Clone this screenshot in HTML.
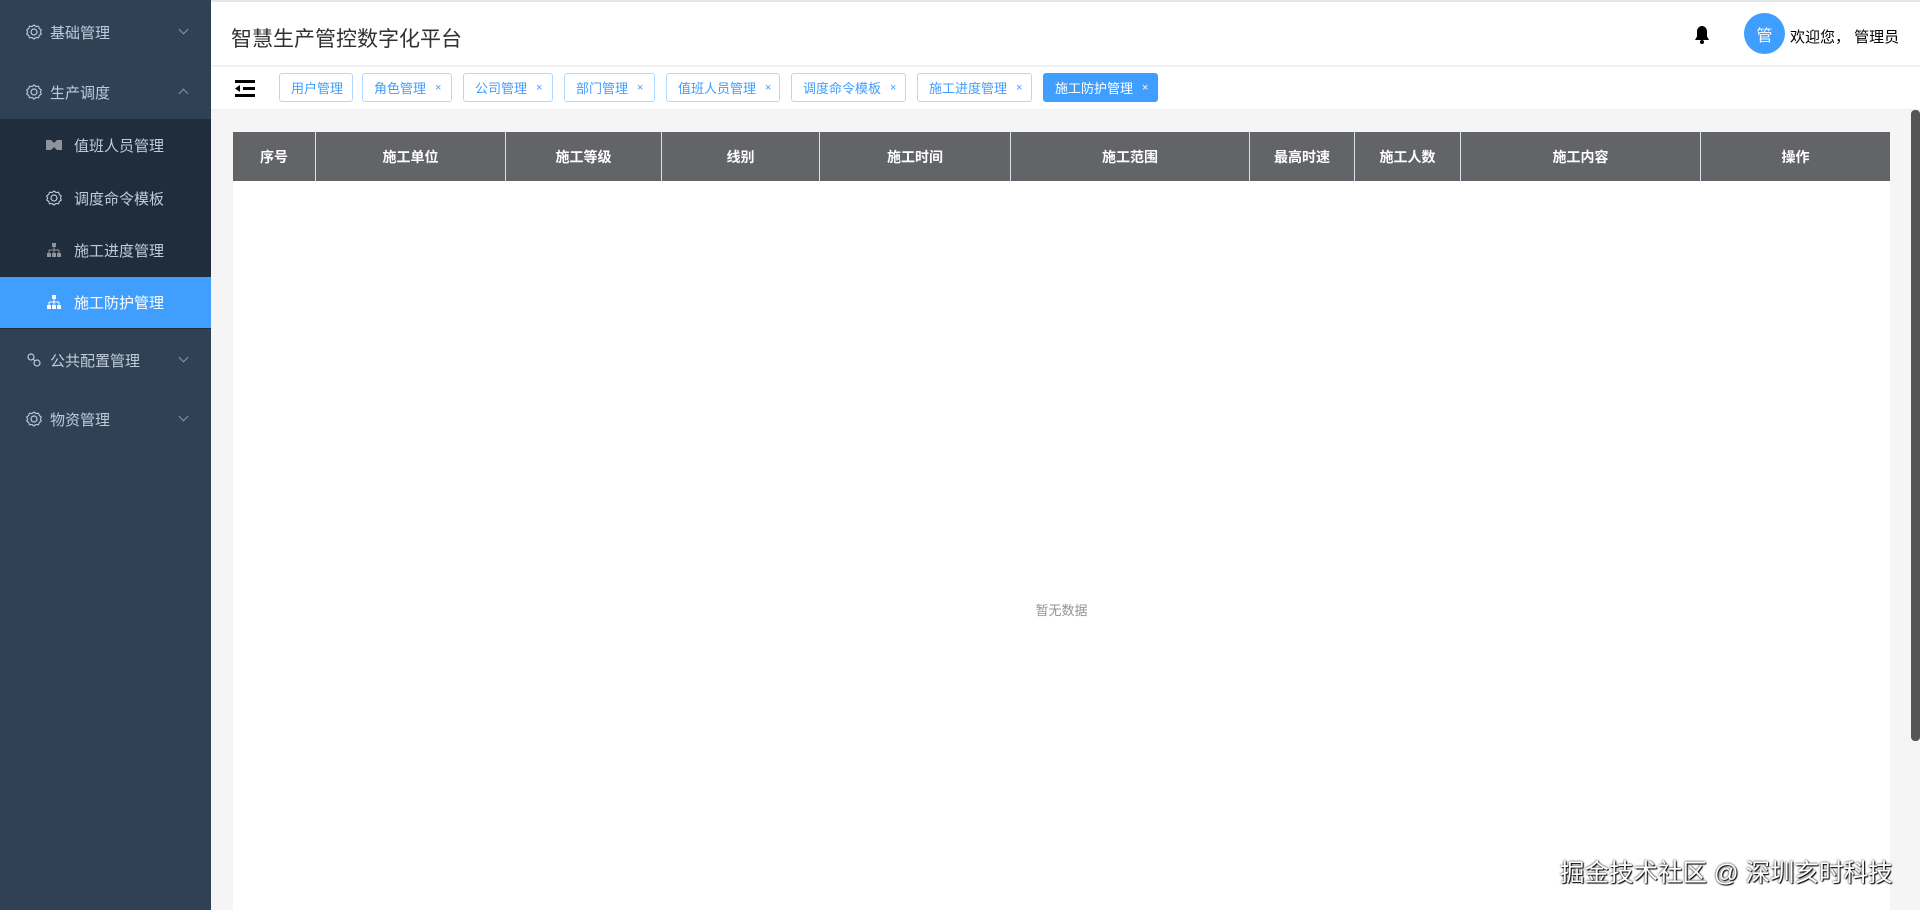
<!DOCTYPE html>
<html><head><meta charset="utf-8"><style>
*{margin:0;padding:0;box-sizing:border-box}
body{width:1920px;height:910px;overflow:hidden;font-family:"Liberation Sans","Noto Sans CJK SC",sans-serif;background:#f5f5f5;position:relative}
.side{position:absolute;left:0;top:0;width:211px;height:910px;background:#304156}
.mi{position:absolute;left:0;width:211px;color:#bfcbd9;font-size:15px;display:flex;align-items:center}
.mi svg{margin-right:8px}
.sub{position:absolute;left:0;top:119px;width:211px;height:210px;background:#1f2d3d}
.arrow{position:absolute;right:24px;width:7px;height:7px;border-right:1px solid #909399;border-bottom:1px solid #909399}
.hdr{position:absolute;left:211px;top:0;right:0;height:66px;background:#fff;border-top:2px solid #e6e6e6;border-bottom:1px solid #eee}
.tabs{position:absolute;left:211px;top:67px;right:0;height:43px;background:#fff;border-bottom:1px solid #eee}
.tab{position:absolute;top:6px;height:29px;border:1px solid #b3d8ff;border-radius:3px;color:#409eff;font-size:13px;display:flex;align-items:center;padding-left:11px;background:#fff}
.tab span{font-size:11px;margin-left:9px}
.tab.act{background:#409eff;border-color:#409eff;color:#fff}
.tbl{position:absolute;left:233px;top:132px;width:1657px;bottom:0;background:#fff}
.th{position:absolute;top:0;height:49px;background:#636467;color:#fff;font-weight:bold;font-size:14px;display:flex;align-items:center;justify-content:center;border-right:1px solid #dcdfe6}
</style></head><body>
<div class="side">
 <div class="mi" style="top:20px;height:24px;padding-left:26px"><svg width="16" height="16" viewBox="0 0 16 16"><circle cx="8" cy="8" r="3" fill="none" stroke="#bfcbd9" stroke-width="1.2"/><path d="M8 1l2 1.5 2.5-.3.8 2.3 2 1.5-1 2 1 2-2 1.5-.8 2.3-2.5-.3L8 15l-2-1.5-2.5.3-.8-2.3-2-1.5 1-2-1-2 2-1.5.8-2.3 2.5.3z" fill="none" stroke="#bfcbd9" stroke-width="1.1"/></svg>基础管理</div>
 <div class="arrow" style="top:26px;transform:rotate(45deg)"></div>
 <div class="mi" style="top:80px;height:24px;padding-left:26px"><svg width="16" height="16" viewBox="0 0 16 16"><circle cx="8" cy="8" r="3" fill="none" stroke="#bfcbd9" stroke-width="1.2"/><path d="M8 1l2 1.5 2.5-.3.8 2.3 2 1.5-1 2 1 2-2 1.5-.8 2.3-2.5-.3L8 15l-2-1.5-2.5.3-.8-2.3-2-1.5 1-2-1-2 2-1.5.8-2.3 2.5.3z" fill="none" stroke="#bfcbd9" stroke-width="1.1"/></svg>生产调度</div>
 <div class="arrow" style="top:90px;transform:rotate(-135deg)"></div>
 <div class="sub"></div>
 <div class="mi" style="top:133px;height:24px;padding-left:46px"><svg width="16" height="12" viewBox="0 0 16 12" style="margin-right:12px"><path d="M0 1h5l3 3 3-3h5v10h-5l-3-3-3 3H0z" fill="#909399"/></svg>值班人员管理</div>
 <div class="mi" style="top:186px;height:24px;padding-left:46px"><svg width="16" height="16" viewBox="0 0 16 16" style="margin-right:12px"><circle cx="8" cy="8" r="3" fill="none" stroke="#bfcbd9" stroke-width="1.2"/><path d="M8 1l2 1.5 2.5-.3.8 2.3 2 1.5-1 2 1 2-2 1.5-.8 2.3-2.5-.3L8 15l-2-1.5-2.5.3-.8-2.3-2-1.5 1-2-1-2 2-1.5.8-2.3 2.5.3z" fill="none" stroke="#bfcbd9" stroke-width="1.1"/></svg>调度命令模板</div>
 <div class="mi" style="top:238px;height:24px;padding-left:46px"><svg width="16" height="14" viewBox="0 0 16 14" style="margin-right:12px"><rect x="6" y="0" width="4" height="4" fill="#909399"/><path d="M8 4v3M3 7h10M3 7v3M8 7v3M13 7v3" stroke="#909399"/><rect x="1" y="10" width="4" height="4" fill="#909399"/><rect x="6" y="10" width="4" height="4" fill="#909399"/><rect x="11" y="10" width="4" height="4" fill="#909399"/></svg>施工进度管理</div>
 <div style="position:absolute;top:277px;left:0;width:211px;height:51px;background:#409eff"></div>
 <div class="mi" style="top:290px;height:24px;padding-left:46px;color:#fff"><svg width="16" height="14" viewBox="0 0 16 14" style="margin-right:12px"><rect x="6" y="0" width="4" height="4" fill="#fff"/><path d="M8 4v3M3 7h10M3 7v3M8 7v3M13 7v3" stroke="#fff"/><rect x="1" y="10" width="4" height="4" fill="#fff"/><rect x="6" y="10" width="4" height="4" fill="#fff"/><rect x="11" y="10" width="4" height="4" fill="#fff"/></svg>施工防护管理</div>
 <div class="mi" style="top:348px;height:24px;padding-left:26px"><svg width="16" height="16" viewBox="0 0 16 16"><circle cx="5" cy="5" r="3" fill="none" stroke="#bfcbd9" stroke-width="1.2"/><circle cx="11" cy="11" r="3" fill="none" stroke="#bfcbd9" stroke-width="1.2"/><path d="M7 7l2 2" stroke="#bfcbd9"/></svg>公共配置管理</div>
 <div class="arrow" style="top:354px;transform:rotate(45deg)"></div>
 <div class="mi" style="top:407px;height:24px;padding-left:26px"><svg width="16" height="16" viewBox="0 0 16 16"><circle cx="8" cy="8" r="3" fill="none" stroke="#bfcbd9" stroke-width="1.2"/><path d="M8 1l2 1.5 2.5-.3.8 2.3 2 1.5-1 2 1 2-2 1.5-.8 2.3-2.5-.3L8 15l-2-1.5-2.5.3-.8-2.3-2-1.5 1-2-1-2 2-1.5.8-2.3 2.5.3z" fill="none" stroke="#bfcbd9" stroke-width="1.1"/></svg>物资管理</div>
 <div class="arrow" style="top:413px;transform:rotate(45deg)"></div>
</div>
<div class="hdr">
 <div style="position:absolute;left:20px;top:21px;font-size:21px;color:#303133">智慧生产管控数字化平台</div>
 <svg style="position:absolute;left:1483px;top:23px" width="16" height="20" viewBox="0 0 16 20"><path d="M8 1c-3 0-5 2.5-5 5.5v5L1 15h14l-2-3.5v-5C13 3.5 11 1 8 1z" fill="#000"/><circle cx="8" cy="17" r="2" fill="#000"/></svg>
 <div style="position:absolute;left:1533px;top:11px;width:41px;height:41px;border-radius:50%;background:#409eff;color:#fff;font-size:16px;display:flex;align-items:center;justify-content:center">管</div>
 <div style="position:absolute;left:1579px;top:24px;font-size:15px;color:#000">欢迎您，&nbsp;管理员</div>
</div>
<div class="tabs">
 <svg style="position:absolute;left:24px;top:13px" width="20" height="17" viewBox="0 0 20 17"><path d="M0 1.5h20M8 8.5h12M0 15.5h20" stroke="#000" stroke-width="3"/><path d="M0 8.5l5-3.5v7z" fill="#000"/></svg>
 <div class="tab" style="left:68px;width:74px">用户管理</div>
 <div class="tab" style="left:151px;width:90px">角色管理<span>×</span></div>
 <div class="tab" style="left:252px;width:90px">公司管理<span>×</span></div>
 <div class="tab" style="left:353px;width:91px">部门管理<span>×</span></div>
 <div class="tab" style="left:455px;width:114px">值班人员管理<span>×</span></div>
 <div class="tab" style="left:580px;width:115px">调度命令模板<span>×</span></div>
 <div class="tab" style="left:706px;width:115px">施工进度管理<span>×</span></div>
 <div class="tab act" style="left:832px;width:115px">施工防护管理<span>×</span></div>
</div>
<div class="tbl">
 <div class="th" style="left:0;width:83px">序号</div>
 <div class="th" style="left:83px;width:190px">施工单位</div>
 <div class="th" style="left:273px;width:156px">施工等级</div>
 <div class="th" style="left:429px;width:158px">线别</div>
 <div class="th" style="left:587px;width:191px">施工时间</div>
 <div class="th" style="left:778px;width:239px">施工范围</div>
 <div class="th" style="left:1017px;width:105px">最高时速</div>
 <div class="th" style="left:1122px;width:106px">施工人数</div>
 <div class="th" style="left:1228px;width:240px">施工内容</div>
 <div class="th" style="left:1468px;width:189px;border-right:none">操作</div>
 <div style="position:absolute;left:0;width:1657px;top:468px;text-align:center;font-size:13px;color:#909399">暂无数据</div>
</div>
<div style="position:absolute;left:1911px;top:110px;width:9px;height:631px;background:#555;border-radius:4px"></div>
<div style="position:absolute;left:1560px;top:854px;font-size:24.5px;color:#fff;text-shadow:0 0 2px #000,1px 1px 1px #000">掘金技术社区 @ 深圳亥时科技</div>
</body></html>
